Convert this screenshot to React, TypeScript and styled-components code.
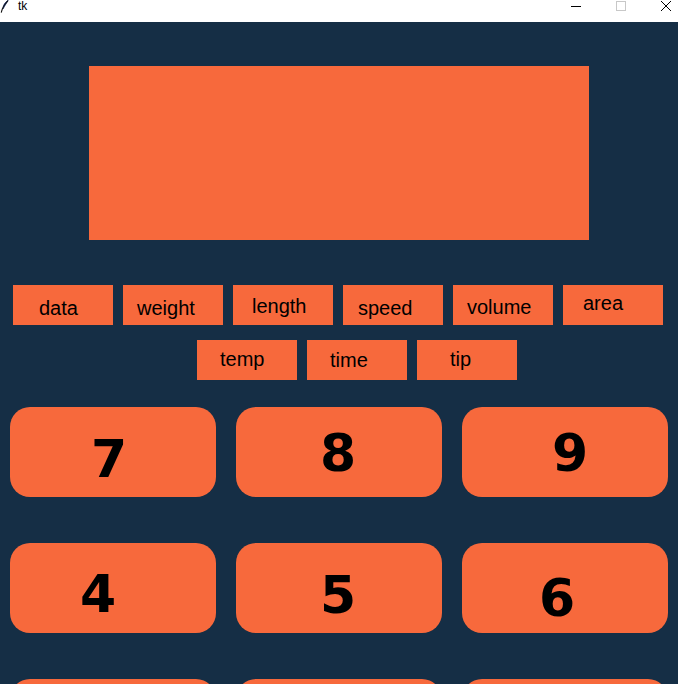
import React from "react";
import styled, { createGlobalStyle } from "styled-components";

const NAVY = "#152e45";
const ORANGE = "#f7693c";

const GlobalStyle = createGlobalStyle`
  html, body {
    margin: 0;
    padding: 0;
    background: ${NAVY};
    overflow: hidden;
  }
  * { box-sizing: border-box; }
`;

const Window = styled.div`
  width: 678px;
  height: 684px;
  overflow: hidden;
  display: flex;
  flex-direction: column;
  background: ${NAVY};
`;

const TitleBar = styled.div`
  height: 22px;
  flex: 0 0 22px;
  background: #ffffff;
  display: flex;
  align-items: flex-start;
`;

const AppIcon = styled.svg`
  width: 9px;
  height: 13px;
  margin-left: 0;
  flex: 0 0 auto;
`;

const TitleText = styled.span`
  margin-left: 9px;
  font-family: "Liberation Sans", Arial, sans-serif;
  font-size: 12px;
  line-height: 13px;
  color: #000;
`;

const Spacer = styled.div`
  flex: 1;
`;

const Controls = styled.div`
  display: flex;
  align-items: flex-start;
  gap: 35px;
  padding-right: 7px;
`;

const ControlIcon = styled.svg<{ $top: number }>`
  width: 10px;
  height: 10px;
  margin-top: ${(p) => p.$top}px;
  flex: 0 0 auto;
`;

const Content = styled.div`
  display: flex;
  flex-direction: column;
  padding-top: 44px;
`;

const Screen = styled.div`
  align-self: center;
  width: 500px;
  height: 174px;
  background: ${ORANGE};
`;

const UnitRow = styled.div<{ $left: number; $top: number }>`
  display: flex;
  gap: 10px;
  padding-left: ${(p) => p.$left}px;
  margin-top: ${(p) => p.$top}px;
`;

const UnitButton = styled.div<{ $px: number; $py: number }>`
  width: 100px;
  height: 40px;
  flex: 0 0 100px;
  background: ${ORANGE};
  display: flex;
  align-items: flex-start;
  padding-left: ${(p) => p.$px}px;
  padding-top: ${(p) => p.$py}px;
  font-family: "Liberation Sans", Arial, sans-serif;
  font-size: 20px;
  line-height: 20px;
  color: #000;
  white-space: nowrap;
`;

const Keypad = styled.div`
  display: grid;
  grid-template-columns: repeat(3, 206px);
  column-gap: 20px;
  row-gap: 46px;
  padding-left: 10px;
  margin-top: 27px;
`;

const Key = styled.div<{ $px: number; $py: number }>`
  height: 90px;
  border-radius: 20px;
  background: ${ORANGE};
  display: flex;
  align-items: flex-start;
  padding-left: ${(p) => p.$px}px;
  padding-top: ${(p) => p.$py}px;
  font-family: "DejaVu Sans", Verdana, sans-serif;
  font-weight: bold;
  font-size: 52px;
  line-height: 52px;
  color: #000;
`;

const units1 = [
  { t: "data", x: 26, y: 13 },
  { t: "weight", x: 14, y: 13 },
  { t: "length", x: 19, y: 11 },
  { t: "speed", x: 15, y: 13 },
  { t: "volume", x: 14, y: 12 },
  { t: "area", x: 20, y: 8 },
];

const units2 = [
  { t: "temp", x: 23, y: 9 },
  { t: "time", x: 23, y: 10 },
  { t: "tip", x: 33, y: 9 },
];

const keys = [
  { id: "k7", t: "7", x: 81, y: 26 },
  { id: "k8", t: "8", x: 84, y: 20 },
  { id: "k9", t: "9", x: 90, y: 20 },
  { id: "k4", t: "4", x: 70, y: 25 },
  { id: "k5", t: "5", x: 84, y: 26 },
  { id: "k6", t: "6", x: 77, y: 29 },
  { id: "k1", t: "", x: 0, y: 0 },
  { id: "k2", t: "", x: 0, y: 0 },
  { id: "k3", t: "", x: 0, y: 0 },
];

export default function App() {
  return (
    <>
      <GlobalStyle />
      <Window>
        <TitleBar>
          <AppIcon viewBox="0 0 9 13">
            <path d="M8.2 0.3 C6.8 2.4 5.2 5.2 3.1 8.8 C2.9 5.6 4.8 2.3 8.2 0.3 Z" fill="#4a7fe0" stroke="#1d2f6b" strokeWidth="0.8" />
            <path d="M8 0.6 C5.6 3 3.6 6 2.3 9 L1.2 12.6" stroke="#111" strokeWidth="1.1" fill="none" />
          </AppIcon>
          <TitleText>tk</TitleText>
          <Spacer />
          <Controls>
            <ControlIcon $top={2} viewBox="0 0 10 10">
              <line x1="0" y1="4.5" x2="10" y2="4.5" stroke="#000" strokeWidth="1" />
            </ControlIcon>
            <ControlIcon $top={1} viewBox="0 0 10 10">
              <rect x="0.5" y="0.5" width="9" height="9" fill="none" stroke="#c8c8c8" strokeWidth="1" />
            </ControlIcon>
            <ControlIcon $top={1} viewBox="0 0 10 10">
              <path d="M0 0 L10 10 M10 0 L0 10" stroke="#000" strokeWidth="1" />
            </ControlIcon>
          </Controls>
        </TitleBar>
        <Content>
          <Screen />
          <UnitRow $left={13} $top={45}>
            {units1.map((u) => (
              <UnitButton key={u.t} $px={u.x} $py={u.y}>
                {u.t}
              </UnitButton>
            ))}
          </UnitRow>
          <UnitRow $left={197} $top={15}>
            {units2.map((u) => (
              <UnitButton key={u.t} $px={u.x} $py={u.y}>
                {u.t}
              </UnitButton>
            ))}
          </UnitRow>
          <Keypad>
            {keys.map((k) => (
              <Key key={k.id} $px={k.x} $py={k.y}>
                {k.t}
              </Key>
            ))}
          </Keypad>
        </Content>
      </Window>
    </>
  );
}
